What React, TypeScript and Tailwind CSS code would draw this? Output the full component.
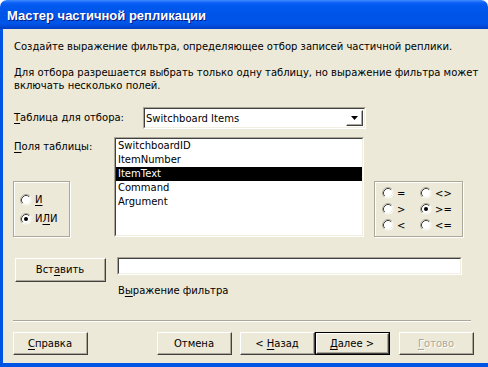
import type { ReactNode } from 'react'

function U({ children }: { children: ReactNode }) {
  return <span className="underline decoration-1 underline-offset-[2px]">{children}</span>
}

function Sunken({ className = '', children }: { className?: string; children?: ReactNode }) {
  return (
    <div
      className={`border border-t-[#ACA899] border-l-[#ACA899] border-b-white border-r-white ${className}`}
    >
      <div className="flex h-full w-full border border-t-[#404040] border-l-[#404040] border-b-[#F1EFE2] border-r-[#F1EFE2] bg-white">
        {children}
      </div>
    </div>
  )
}

function Raised({ className = '', children }: { className?: string; children?: ReactNode }) {
  return (
    <div
      className={`border border-t-white border-l-white border-b-[#404040] border-r-[#404040] ${className}`}
    >
      <div className="flex h-full w-full items-center justify-center border-r border-b border-r-[#ACA899] border-b-[#ACA899]">
        {children}
      </div>
    </div>
  )
}

function Button({
  children,
  className = '',
  isDefault,
  disabled,
}: {
  children: ReactNode
  className?: string
  isDefault?: boolean
  disabled?: boolean
}) {
  const label = (
    <span
      className={
        disabled ? 'text-[#ACA899] [text-shadow:1px_1px_0_#fff]' : 'text-black'
      }
    >
      {children}
    </span>
  )
  if (isDefault) {
    return (
      <div className={`h-[23px] w-[75px] border border-black ${className}`}>
        <Raised className="h-full w-full">{label}</Raised>
      </div>
    )
  }
  return <Raised className={`h-[23px] w-[75px] ${className}`}>{label}</Raised>
}

function Radio({ checked }: { checked?: boolean }) {
  return (
    <svg width="12" height="12" viewBox="0 0 12 12" className="shrink-0">
      <circle cx="6" cy="6" r="5.5" fill="#fff" />
      <path d="M2.11 9.89 A5.5 5.5 0 0 1 9.89 2.11" fill="none" stroke="#ACA899" strokeWidth="1" />
      <path d="M2.82 9.18 A4.5 4.5 0 0 1 9.18 2.82" fill="none" stroke="#404040" strokeWidth="1" />
      <path d="M2.82 9.18 A4.5 4.5 0 0 0 9.18 2.82" fill="none" stroke="#F1EFE2" strokeWidth="1" />
      {checked && <circle cx="6" cy="6" r="2" fill="#000" />}
    </svg>
  )
}

function GroupBox({ className = '', children }: { className?: string; children: ReactNode }) {
  return (
    <div
      className={`border border-[#ACA899] shadow-[inset_1px_1px_0_#fff,1px_1px_0_#fff] ${className}`}
    >
      {children}
    </div>
  )
}

const fields = ['SwitchboardID', 'ItemNumber', 'ItemText', 'Command', 'Argument']

const operators: [string, boolean][] = [
  ['=', false],
  ['<>', false],
  ['>', false],
  ['>=', true],
  ['<', false],
  ['<=', false],
]

export default function App() {
  return (
    <div className="flex h-[367px] w-[488px] flex-col font-['DejaVu_Sans',sans-serif] text-[10px] leading-[13px] text-black">
      <div className="flex h-[29px] shrink-0 items-center rounded-t-[7px] bg-[linear-gradient(to_bottom,#3D8BFF_0px,#0A5EF5_3px,#0058EE_6px,#0054E6_16px,#0056EA_23px,#004AD8_26px,#003DC4_29px)] pt-[1px] pl-[7px]">
        <span className="font-['Liberation_Sans',sans-serif] text-[13px] font-bold text-white [text-shadow:1px_1px_0_#0A1883]">
          Мастер частичной репликации
        </span>
      </div>

      <div className="flex flex-1 bg-[#0054E3] pb-[4px] pl-[3px] pr-[4px]">
        <div className="flex flex-1 flex-col bg-[#ECE9D8] px-[11px] pt-[11px]">
          <p className="whitespace-nowrap">
            Создайте выражение фильтра, определяющее отбор записей частичной реплики.
          </p>
          <p className="mt-[13px] whitespace-nowrap">
            Для отбора разрешается выбрать только одну таблицу, но выражение фильтра может
            <br />
            включать несколько полей.
          </p>

          <div className="mt-[15px] flex">
            <div className="w-[129px] pt-[4px]">
              <U>Т</U>аблица для отбора:
            </div>
            <Sunken className="h-[22px] w-[223px]">
              <div className="flex flex-1 items-center pl-[1px]">Switchboard Items</div>
              <Raised className="my-[1px] mr-[1px] h-[16px] w-[17px]">
                <svg width="7" height="4" viewBox="0 0 7 4">
                  <path d="M0 0 H7 L3.5 4 Z" fill="#000" />
                </svg>
              </Raised>
            </Sunken>
          </div>

          <div className="mt-[8px] flex h-[100px]">
            <div className="flex w-[100px] flex-col">
              <div className="pt-[3px]">
                <U>П</U>оля таблицы:
              </div>
              <GroupBox className="-ml-px mt-auto flex h-[56px] w-[57px] flex-col justify-center gap-[6px] pl-[6px]">
                <div className="flex items-center gap-[3px]">
                  <Radio />
                  <U>И</U>
                </div>
                <div className="flex items-center gap-[3px]">
                  <Radio checked />
                  <span>
                    И<U>Л</U>И
                  </span>
                </div>
              </GroupBox>
            </div>

            <Sunken className="h-[100px] w-[250px]">
              <ul className="flex w-full flex-col">
                {fields.map((f) => (
                  <li
                    key={f}
                    className={`h-[14px] pl-[2px] leading-[14px] ${
                      f === 'ItemText' ? 'bg-black text-white' : ''
                    }`}
                  >
                    {f}
                  </li>
                ))}
              </ul>
            </Sunken>

            <GroupBox className="ml-[10px] grid h-[56px] w-[89px] grid-cols-[38px_1fr] content-center gap-y-[4px] self-end pl-[7px]">
              {operators.map(([op, on]) => (
                <div key={op} className="flex h-[12px] items-center gap-[3px]">
                  <Radio checked={on} />
                  <span>{op}</span>
                </div>
              ))}
            </GroupBox>
          </div>

          <div className="mt-[20px] flex items-start">
            <Raised className="ml-px mt-px h-[24px] w-[91px]">
              Вст<U>а</U>вить
            </Raised>
            <Sunken className="ml-[11px] h-[18px] w-[345px]" />
          </div>

          <div className="mt-[2px] pl-[104px]">
            В<U>ы</U>ражение фильтра
          </div>

          <div className="-ml-px mt-[23px] h-0 w-[458px] border-t border-b border-t-[#ACA899] border-b-white" />

          <div className="-ml-px mt-[10px] flex">
            <Button>
              <U>С</U>правка
            </Button>
            <Button className="ml-[69px]">Отмена</Button>
            <Button className="ml-[8px] w-[73px]">
              &lt; <U>Н</U>азад
            </Button>
            <Button isDefault>
              <U>Д</U>алее &gt;
            </Button>
            <Button className="ml-[9px]" disabled>
              <U>Г</U>отово
            </Button>
          </div>
        </div>
      </div>
    </div>
  )
}
